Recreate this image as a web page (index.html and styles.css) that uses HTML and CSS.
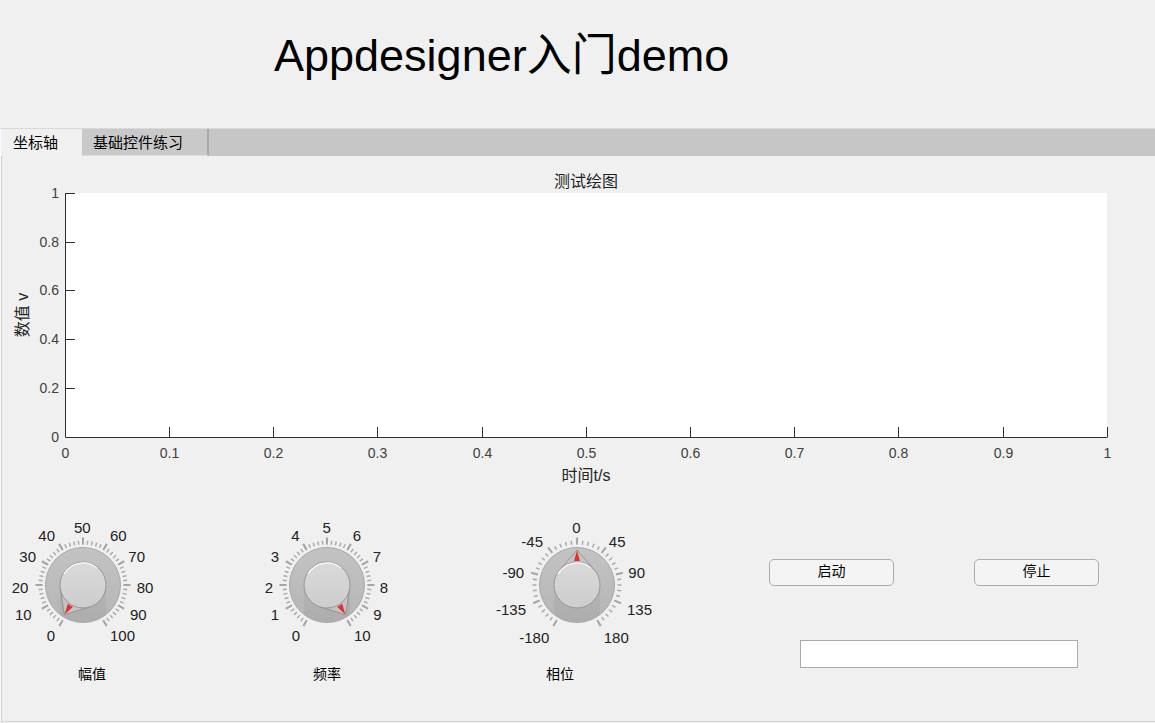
FILE: index.html
```html
<!DOCTYPE html>
<html lang="zh">
<head>
<meta charset="utf-8">
<title>Appdesigner入门demo</title>
<link rel="stylesheet" href="styles.css">
</head>
<body>
<header class="header">
  <h1 class="title">Appdesigner入门demo</h1>
</header>
<section class="tabgroup">
  <div class="tabbar">
    <div class="tab tab-active">坐标轴</div>
    <div class="tab tab-inactive">基础控件练习</div>
  </div>
  <div class="panel">
    <svg class="axes" width="1154" height="357" viewBox="1 156 1154 357">
      <rect class="plot-bg" x="65" y="193" width="1042" height="244"/>
      <path class="axis" d="M65.5 193 V437.5 H1107.5 M1107.5 437 V427"/>
      <path class="axis" d="M65 193.5 H75 M65 242.5 H75 M65 290.5 H75 M65 339.5 H75 M65 388.5 H75
        M169.5 437 V427 M273.5 437 V427 M377.5 437 V427 M482.5 437 V427 M586.5 437 V427
        M690.5 437 V427 M794.5 437 V427 M898.5 437 V427 M1003.5 437 V427"/>
      <g class="tl tl-y">
        <text x="59" y="198">1</text>
        <text x="59" y="247">0.8</text>
        <text x="59" y="295">0.6</text>
        <text x="59" y="344">0.4</text>
        <text x="59" y="393">0.2</text>
        <text x="59" y="442">0</text>
      </g>
      <g class="tl tl-x">
        <text x="65.5" y="458">0</text>
        <text x="169.5" y="458">0.1</text>
        <text x="273.5" y="458">0.2</text>
        <text x="377.5" y="458">0.3</text>
        <text x="482.5" y="458">0.4</text>
        <text x="586.5" y="458">0.5</text>
        <text x="690.5" y="458">0.6</text>
        <text x="794.5" y="458">0.7</text>
        <text x="898.5" y="458">0.8</text>
        <text x="1003.5" y="458">0.9</text>
        <text x="1107.5" y="458">1</text>
      </g>
      <text class="ax-title" x="586" y="187">测试绘图</text>
      <text class="ax-label" x="586" y="481">时间t/s</text>
      <text class="ax-label" transform="translate(22 315) rotate(-90)" y="6">数值 v</text>
    </svg>

    <div class="controls">
      <div class="knob knob-amp">
        <svg class="dial" width="160" height="140" viewBox="0 0 160 140">
          <defs>
            <linearGradient id="bodyGrad" x1="0" y1="0" x2="0" y2="1">
              <stop offset="0" stop-color="#c3c3c3"/>
              <stop offset="1" stop-color="#b5b5b5"/>
            </linearGradient>
            <linearGradient id="capGrad" x1="0" y1="0" x2="0" y2="1">
              <stop offset="0" stop-color="#dadada"/>
              <stop offset="1" stop-color="#cdcdcd"/>
            </linearGradient>
            <clipPath id="bodyClip"><circle cx="80" cy="72" r="37"/></clipPath>
          </defs>
          <path class="tick-minor" d="M59.40 109.17 A42.5 42.5 0 1 1 100.60 109.17" pathLength="302" stroke-dasharray="2 4"/>
          <path class="tick-major" d="M58.87 110.59 A44 44 0 1 1 101.13 110.59" pathLength="302.6" stroke-dasharray="2.6 27.4"/>
          <circle class="body" cx="80" cy="72" r="37.5"/>
          <rect class="side" x="57" y="72" width="46" height="40" clip-path="url(#bodyClip)"/>
          <g transform="rotate(-148 80 72)"><polygon class="pointer" points="62.66,56.89 80,37 97.34,56.89"/></g>
          <circle class="cap" cx="80" cy="72" r="23"/>
          <path class="hl" d="M60.95 61 A22 22 0 0 1 94.14 55.15"/>
          <g transform="rotate(-148 80 72)"><polygon class="red" points="80,37.5 77,48 83,48"/></g>
          <g class="klabel">
            <text x="48" y="127.9">0</text>
            <text x="20.3" y="106.9">10</text>
            <text x="17" y="79.9">20</text>
            <text x="24.7" y="48.7">30</text>
            <text x="43.7" y="27.9">40</text>
            <text x="79.3" y="20.4">50</text>
            <text x="115.3" y="27.9">60</text>
            <text x="133.7" y="48.7">70</text>
            <text x="142" y="79.9">80</text>
            <text x="135.3" y="106.9">90</text>
            <text x="119.5" y="127.9">100</text>
          </g>
        </svg>
        <div class="caption cap-amp">幅值</div>
      </div>

      <div class="knob knob-freq">
        <svg class="dial" width="160" height="140" viewBox="0 0 160 140">
          <path class="tick-minor" d="M59.40 109.17 A42.5 42.5 0 1 1 100.60 109.17" pathLength="302" stroke-dasharray="2 4"/>
          <path class="tick-major" d="M58.87 110.59 A44 44 0 1 1 101.13 110.59" pathLength="302.6" stroke-dasharray="2.6 27.4"/>
          <circle class="body" cx="80" cy="72" r="37.5"/>
          <rect class="side" x="57" y="72" width="46" height="40" clip-path="url(#bodyClip)"/>
          <g transform="rotate(148 80 72)"><polygon class="pointer" points="62.66,56.89 80,37 97.34,56.89"/></g>
          <circle class="cap" cx="80" cy="72" r="23"/>
          <path class="hl" d="M60.95 61 A22 22 0 0 1 94.14 55.15"/>
          <g transform="rotate(148 80 72)"><polygon class="red" points="80,37.5 77,48 83,48"/></g>
          <g class="klabel">
            <text x="48.8" y="127.9">0</text>
            <text x="28" y="107.4">1</text>
            <text x="22" y="79.9">2</text>
            <text x="28" y="48.7">3</text>
            <text x="48.3" y="27.9">4</text>
            <text x="79.7" y="20.4">5</text>
            <text x="110" y="27.9">6</text>
            <text x="129.8" y="48.7">7</text>
            <text x="137" y="79.9">8</text>
            <text x="130.5" y="107.4">9</text>
            <text x="115.3" y="127.9">10</text>
          </g>
        </svg>
        <div class="caption">频率</div>
      </div>

      <div class="knob knob-phase">
        <svg class="dial" width="160" height="140" viewBox="0 0 160 140">
          <path class="tick-minor" d="M59.40 109.17 A42.5 42.5 0 1 1 100.60 109.17" pathLength="302" stroke-dasharray="2 5.5"/>
          <path class="tick-major" d="M58.87 110.59 A44 44 0 1 1 101.13 110.59" pathLength="302.6" stroke-dasharray="2.6 34.9"/>
          <circle class="body" cx="80" cy="72" r="37.5"/>
          <rect class="side" x="57" y="72" width="46" height="40" clip-path="url(#bodyClip)"/>
          <polygon class="pointer" points="62.66,56.89 80,37 97.34,56.89"/>
          <circle class="cap" cx="80" cy="72" r="23"/>
          <path class="hl" d="M60.95 61 A22 22 0 0 1 94.14 55.15"/>
          <polygon class="red" points="80,37.5 77,48 83,48"/>
          <g class="klabel">
            <text x="79.3" y="20.4">0</text>
            <text x="35.2" y="33.6">-45</text>
            <text x="120.2" y="33.6">45</text>
            <text x="16.3" y="64.6">-90</text>
            <text x="139.7" y="64.6">90</text>
            <text x="14" y="102.1">-135</text>
            <text x="142.5" y="102.1">135</text>
            <text x="37.3" y="130.2">-180</text>
            <text x="119.3" y="130.2">180</text>
          </g>
        </svg>
        <div class="caption cap-phase">相位</div>
      </div>

      <div class="actions">
        <div class="buttons">
          <button class="btn" type="button">启动</button>
          <button class="btn" type="button">停止</button>
        </div>
        <input class="field" type="text" value="">
      </div>
    </div>
  </div>
</section>
</body>
</html>
```
FILE: styles.css
```css
html, body {
  margin: 0;
  padding: 0;
}
body {
  width: 1155px;
  height: 723px;
  overflow: hidden;
  background: #f0f0f0;
  font-family: "Liberation Sans", "Noto Sans CJK SC", sans-serif;
  color: #000;
}

.header {
  height: 128px;
  box-sizing: border-box;
  padding: 30px 0 0 274px;
}
.title {
  margin: 0;
  font-size: 45px;
  line-height: 52px;
  font-weight: normal;
  white-space: nowrap;
}

.tabgroup {
  height: 594px;
  display: flex;
  flex-direction: column;
}
.tabbar {
  height: 28px;
  box-sizing: border-box;
  display: flex;
  background: #c6c6c6;
  border-top: 1px solid #d9d9d9;
}
.tab {
  height: 27px;
  box-sizing: border-box;
  font-size: 15px;
  line-height: 27px;
  white-space: nowrap;
}
.tab-active {
  width: 82px;
  padding-left: 12px;
  background: #f0f0f0;
  border-left: 1px solid #fbfbfb;
}
.tab-inactive {
  width: 127px;
  padding-left: 11px;
  background: #c9c9c9;
  border-right: 2px solid #a9a9a9;
  border-bottom: 1px solid #dcdcdc;
}

.panel {
  flex: 1;
  box-sizing: border-box;
  border-left: 1px solid #fafafa;
  border-bottom: 1px solid #d3d3d3;
  box-shadow: inset 1px 0 0 #d0d0d0;
  display: flex;
  flex-direction: column;
}

.axes {
  display: block;
  font-family: "Liberation Sans", "Noto Sans CJK SC", sans-serif;
}
.plot-bg { fill: #ffffff; }
.axis {
  fill: none;
  stroke: #2e2e2e;
  stroke-width: 1;
}
.tl { font-size: 14px; fill: #404040; }
.tl-y { text-anchor: end; }
.tl-x { text-anchor: middle; }
.ax-title { font-size: 16px; fill: #1e1e1e; text-anchor: middle; }
.ax-label { font-size: 16px; fill: #262626; text-anchor: middle; }

.controls {
  display: flex;
  align-items: flex-start;
}
.knob {
  width: 160px;
  display: flex;
  flex-direction: column;
}
.knob-amp { margin-left: 2px; }
.knob-freq { margin-left: 84px; }
.knob-phase { margin-left: 90px; }

.dial {
  display: block;
  overflow: visible;
  font-family: "Liberation Sans", sans-serif;
}
.tick-minor {
  fill: none;
  stroke: #ababab;
  stroke-width: 4;
}
.tick-major {
  fill: none;
  stroke: #a6a6a6;
  stroke-width: 7;
}
.body {
  fill: url(#bodyGrad);
  stroke: #a8a8a8;
  stroke-width: 1;
}
.side { fill: rgba(0, 0, 0, 0.04); }
.pointer {
  fill: #c4c4c4;
  stroke: #8e8e8e;
  stroke-width: 0.8;
  stroke-linejoin: round;
}
.cap {
  fill: url(#capGrad);
  stroke: #979797;
  stroke-width: 1;
}
.hl {
  fill: none;
  stroke: #fafafa;
  stroke-width: 1.2;
}
.red { fill: #e5302e; }
.klabel {
  font-size: 15px;
  fill: #222222;
  text-anchor: middle;
}

.caption {
  margin-top: 11px;
  font-size: 14px;
  line-height: 20px;
  text-align: center;
}
.cap-amp { padding-left: 18px; }
.cap-phase { padding-right: 34px; }

.actions {
  margin-left: 112px;
  padding-top: 46px;
  width: 330px;
  display: flex;
  flex-direction: column;
}
.buttons {
  display: flex;
  justify-content: space-between;
}
.btn {
  width: 125px;
  height: 27px;
  box-sizing: border-box;
  margin: 0;
  padding: 0 0 3px;
  border: 1px solid #acacac;
  border-radius: 5px;
  background: #f4f4f4;
  font-family: "Liberation Sans", "Noto Sans CJK SC", sans-serif;
  font-size: 14px;
  line-height: 20px;
  color: #000;
}
.field {
  margin: 54px 0 0 31px;
  width: 278px;
  height: 28px;
  box-sizing: border-box;
  padding: 0 4px;
  border: 1px solid #ababab;
  border-radius: 0;
  background: #fff;
  outline: none;
}
```
